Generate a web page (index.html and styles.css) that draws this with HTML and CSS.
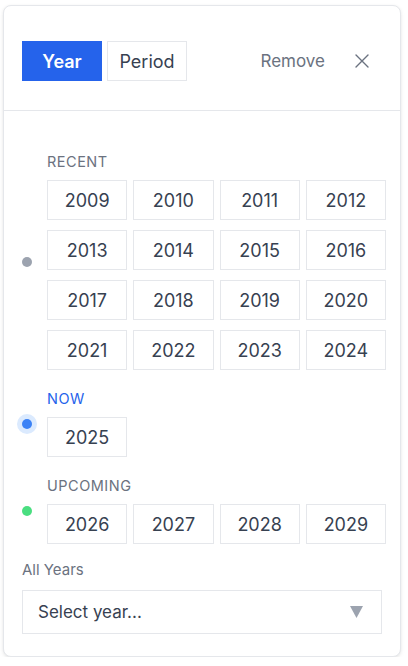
FILE: index.html
```html
<!DOCTYPE html>
<html>
<head>
<meta charset="utf-8">
<link rel="stylesheet" href="styles.css">
</head>
<body>
<div class="page">
  <div class="card">
    <div class="header">
      <div class="tabs">
        <button class="tab tab-active">Year</button>
        <button class="tab">Period</button>
      </div>
      <div class="actions">
        <button class="remove">Remove</button>
        <button class="close" aria-label="Close">
          <svg width="14" height="14" viewBox="0 0 14 14"><path d="M1 1 L13 13 M13 1 L1 13" stroke="#6b7280" stroke-width="1.4" fill="none" stroke-linecap="round"/></svg>
        </button>
      </div>
    </div>
    <div class="body">
      <div class="section">
        <span class="dot dot-past"></span>
        <div class="section-main">
          <div class="label">RECENT</div>
          <div class="grid">
            <button class="year">2009</button><button class="year">2010</button><button class="year">2011</button><button class="year">2012</button>
            <button class="year">2013</button><button class="year">2014</button><button class="year">2015</button><button class="year">2016</button>
            <button class="year">2017</button><button class="year">2018</button><button class="year">2019</button><button class="year">2020</button>
            <button class="year">2021</button><button class="year">2022</button><button class="year">2023</button><button class="year">2024</button>
          </div>
        </div>
      </div>
      <div class="section">
        <span class="dot dot-now"></span>
        <div class="section-main">
          <div class="label label-now">NOW</div>
          <div class="grid">
            <button class="year">2025</button>
          </div>
        </div>
      </div>
      <div class="section">
        <span class="dot dot-future"></span>
        <div class="section-main">
          <div class="label">UPCOMING</div>
          <div class="grid">
            <button class="year">2026</button><button class="year">2027</button><button class="year">2028</button><button class="year">2029</button>
          </div>
        </div>
      </div>
      <div class="all">
        <div class="all-label">All Years</div>
        <div class="select">
          <span class="select-text">Select year...</span>
          <svg class="caret" width="13" height="12" viewBox="0 0 13 12"><polygon points="0,0 13,0 6.5,12" fill="#9ca3af"/></svg>
        </div>
      </div>
    </div>
  </div>
</div>
</body>
</html>
```
FILE: styles.css
```css
* { box-sizing: border-box; }
html, body { margin: 0; padding: 0; background: #ffffff; }
body { font-family: Inter, "Noto Sans", "Liberation Sans", sans-serif; color: #374151; }
button { font-family: inherit; margin: 0; cursor: pointer; }

.page { padding: 5px 7px 0 3px; }

.card {
  width: 398px;
  height: 652px;
  background: #ffffff;
  border: 1px solid #e5e7eb;
  border-radius: 8px;
  box-shadow: 0 1px 3px rgba(0,0,0,0.08), 0 2px 6px rgba(0,0,0,0.04);
  display: flex;
  flex-direction: column;
}

.header {
  display: flex;
  align-items: center;
  justify-content: space-between;
  padding: 35px 31px 29px 18px;
  border-bottom: 1px solid #e5e7eb;
}

.tabs { display: flex; gap: 5px; }
.tab {
  width: 80px;
  height: 40px;
  border: 1px solid #e5e7eb;
  background: #ffffff;
  color: #374151;
  font-size: 18px;
  font-weight: 400;
  padding: 0;
}
.tab-active {
  background: #2563eb;
  border-color: #2563eb;
  color: #ffffff;
  font-weight: 600;
}

.actions { display: flex; align-items: center; gap: 30px; }
.remove {
  border: none;
  background: none;
  padding: 0;
  font-size: 17px;
  color: #6b7280;
}
.close {
  border: none;
  background: none;
  padding: 0;
  width: 14px;
  height: 14px;
  display: flex;
}

.body {
  display: flex;
  flex-direction: column;
  gap: 20px;
  padding: 42px 14px 22px 18px;
}

.section {
  display: flex;
  align-items: center;
  gap: 15px;
}

.dot {
  flex: none;
  width: 10px;
  height: 10px;
  border-radius: 50%;
}
.dot-past { background: #9ca3af; }
.dot-now { background: #3b82f6; box-shadow: 0 0 0 5px #dbeafe; }
.dot-future { background: #4ade80; }

.section-main { flex: 1; display: flex; flex-direction: column; gap: 9px; }

.label {
  font-size: 14.5px;
  line-height: 18px;
  font-weight: 400;
  letter-spacing: 0.5px;
  color: #6b7280;
}
.label-now { color: #2563eb; }

.grid {
  display: grid;
  grid-template-columns: repeat(4, 1fr);
  column-gap: 6px;
  row-gap: 10px;
}

.year {
  height: 40px;
  border: 1px solid #e5e7eb;
  background: #ffffff;
  color: #374151;
  font-size: 18px;
  font-weight: 400;
  padding: 0;
}

.all { margin-top: -3px; margin-right: 4px; display: flex; flex-direction: column; gap: 11px; }
.all-label { font-size: 15px; line-height: 18px; color: #6b7280; }

.select {
  height: 44px;
  border: 1px solid #e5e7eb;
  display: flex;
  align-items: center;
  justify-content: space-between;
  padding: 0 18px 0 15px;
}
.select-text { font-size: 17px; color: #374151; }
.caret { display: block; }
```
